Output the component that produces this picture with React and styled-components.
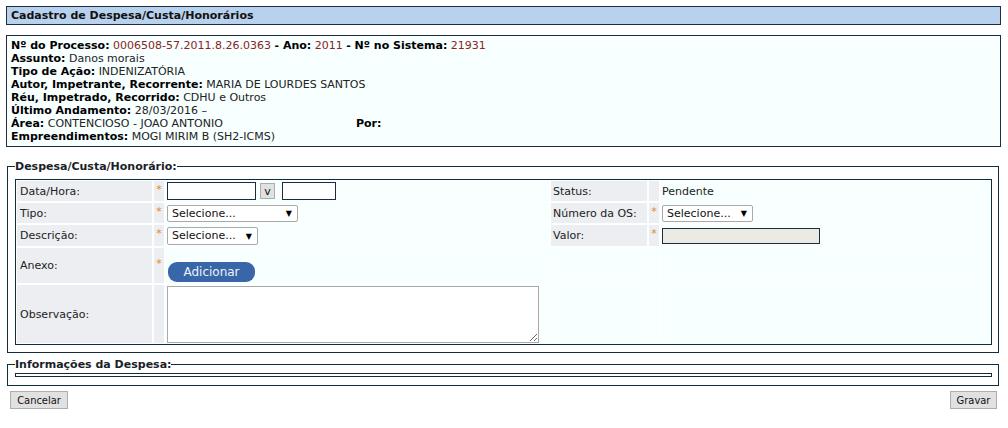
import React from "react";
import styled, { createGlobalStyle } from "styled-components";

const Global = createGlobalStyle`
  html, body { margin: 0; padding: 0; background: #ffffff; }
  body { font-family: Verdana, "DejaVu Sans", sans-serif; font-size: 11px; color: #111; }
`;

const Page = styled.div`
  width: 995px;
  padding: 6px 0 0 6px;
  display: flex;
  flex-direction: column;
`;

const TitleBar = styled.div`
  border: 1px solid #1c2d48;
  background: #b8d1ed;
  font-weight: bold;
  font-size: 11px;
  line-height: 13px;
  padding: 2px 4px;
  box-sizing: border-box;
  height: 19px;
  display: flex;
  align-items: center;
`;

const InfoBox = styled.div`
  margin-top: 10px;
  border: 1px solid #1c2d48;
  background: #f7ffff;
  padding: 3px 4px 2px;
  line-height: 13px;
  height: 112px;
  box-sizing: border-box;
`;

const InfoLine = styled.div`
  white-space: nowrap;
`;

const InfoGrid = styled.div`
  display: grid;
  grid-template-columns: 345px auto;
`;

const B = styled.b`
  font-weight: bold;
  color: #000;
`;

const Val = styled.span`
  color: ${(p) => (p.$red ? "#8b2323" : "#222")};
`;

const Fieldset = styled.fieldset`
  margin: ${(p) => p.$mt}px 2px 0 1px;
  padding: ${(p) => p.$pt}px 8px ${(p) => p.$pb}px 7px;
  border: 1px solid #0f2d3a;
  min-width: 0;
`;

const Legend = styled.legend`
  padding: 0;
  font-weight: bold;
  font-size: 11px;
  line-height: 13px;
  color: #1a1f2a;
`;

const FormTable = styled.table`
  width: 977px;
  table-layout: fixed;
  border-collapse: separate;
  border-spacing: 0;
  border: 1px solid #0f2d3a;
  background: #f7ffff;
  box-sizing: border-box;
`;

const Cell = styled.td`
  box-sizing: border-box;
  border: 1px solid #fbffff;
  padding: ${(p) => p.$pad || "0"};
  vertical-align: middle;
  background: ${(p) => (p.$grey ? "#eceef1" : "transparent")};
  color: #222;
  height: ${(p) => p.$h}px;
  white-space: nowrap;
  text-align: ${(p) => (p.$center ? "center" : "left")};
`;

const Star = styled.span`
  color: #e08a2a;
  font-size: 11px;
  display: inline-block;
  transform: translateY(-2px);
`;

const TextInput = styled.input`
  box-sizing: border-box;
  width: ${(p) => p.$w}px;
  height: ${(p) => p.$h || 18}px;
  border: 1px solid #1c2b40;
  background: ${(p) => (p.disabled ? "#ebebe4" : "#fff")};
  margin: 0 0 0 ${(p) => p.$ml || 1}px;
  padding: 0 2px;
  font: 11px Verdana, "DejaVu Sans", sans-serif;
  vertical-align: middle;
`;

const SmallButton = styled.button`
  box-sizing: border-box;
  width: 15px;
  height: 16px;
  margin-left: 4px;
  padding: 0;
  border: 1px solid #adadad;
  background: #e1e1e1;
  font: 11px Verdana, "DejaVu Sans", sans-serif;
  color: #111;
  vertical-align: middle;
`;

const SelectWrap = styled.span`
  position: relative;
  display: inline-block;
  vertical-align: middle;
  margin-left: 1px;
`;

const Select = styled.select`
  appearance: none;
  -webkit-appearance: none;
  box-sizing: border-box;
  width: ${(p) => p.$w}px;
  height: ${(p) => p.$h || 18}px;
  border: 1px solid #a9a9a9;
  border-radius: 2px;
  background: #fff;
  padding: 0 0 0 4px;
  font: 11px Verdana, "DejaVu Sans", sans-serif;
  color: #111;
  display: block;
`;

const Arrow = styled.span`
  position: absolute;
  right: 6px;
  top: 50%;
  transform: translateY(-50%);
  font-size: 8px;
  color: #000;
  pointer-events: none;
`;

const BlueButton = styled.button`
  box-sizing: border-box;
  width: 87px;
  height: 20px;
  margin: 13px 0 0 2px;
  padding: 0;
  border: none;
  border-radius: 9px;
  background: #3866a8;
  color: #eef3fa;
  font: 12px Verdana, "DejaVu Sans", sans-serif;
  display: block;
`;

const TextArea = styled.textarea`
  box-sizing: border-box;
  width: 372px;
  height: 57px;
  margin: 0 0 0 1px;
  border: 1px solid #a9a9a9;
  background: #fff;
  display: block;
`;

const EmptyTable = styled.div`
  width: 977px;
  height: 4px;
  box-sizing: border-box;
  border: 1px solid #0f2d3a;
  margin-top: 2px;
`;

const ButtonRow = styled.div`
  display: flex;
  justify-content: space-between;
  padding: 0 4px;
  margin-top: 5px;
`;

const GreyButton = styled.button`
  box-sizing: border-box;
  height: 18px;
  width: ${(p) => p.$w}px;
  padding: 0;
  border: 1px solid #adadad;
  background: #e1e1e1;
  font-family: "DejaVu Sans Condensed", "DejaVu Sans", sans-serif;
  font-stretch: condensed;
  font-size: 11px;
  color: #111;
`;

const Chosen = ({ w, h }) => (
  <SelectWrap>
    <Select $w={w} $h={h} defaultValue="">
      <option value="">Selecione...</option>
    </Select>
    <Arrow>▼</Arrow>
  </SelectWrap>
);

export default function App() {
  return (
    <>
      <Global />
      <Page>
        <TitleBar>Cadastro de Despesa/Custa/Honorários</TitleBar>
        <InfoBox>
          <InfoLine>
            <B>Nº do Processo:</B> <Val $red>0006508-57.2011.8.26.0363</Val> <B>- Ano:</B>{" "}
            <Val $red>2011</Val> <B>- Nº no Sistema:</B> <Val $red>21931</Val>
          </InfoLine>
          <InfoLine>
            <B>Assunto:</B> <Val>Danos morais</Val>
          </InfoLine>
          <InfoLine>
            <B>Tipo de Ação:</B> <Val>INDENIZATÓRIA</Val>
          </InfoLine>
          <InfoLine>
            <B>Autor, Impetrante, Recorrente:</B> <Val>MARIA DE LOURDES SANTOS</Val>
          </InfoLine>
          <InfoLine>
            <B>Réu, Impetrado, Recorrido:</B> <Val>CDHU e Outros</Val>
          </InfoLine>
          <InfoLine>
            <B>Último Andamento:</B> <Val>28/03/2016 –</Val>
          </InfoLine>
          <InfoGrid>
            <InfoLine>
              <B>Área:</B> <Val>CONTENCIOSO - JOAO ANTONIO</Val>
            </InfoLine>
            <InfoLine>
              <B>Por:</B>
            </InfoLine>
          </InfoGrid>
          <InfoLine>
            <B>Empreendimentos:</B> <Val>MOGI MIRIM B (SH2-ICMS)</Val>
          </InfoLine>
        </InfoBox>

        <Fieldset $mt={13} $pt={6} $pb={7}>
          <Legend>Despesa/Custa/Honorário:</Legend>
          <FormTable>
            <colgroup>
              <col style={{ width: 137 }} />
              <col style={{ width: 12 }} />
              <col style={{ width: 385 }} />
              <col style={{ width: 98 }} />
              <col style={{ width: 12 }} />
              <col style={{ width: 331 }} />
            </colgroup>
            <tbody>
              <tr>
                <Cell $grey $h={22} $pad="0 3px">Data/Hora:</Cell>
                <Cell $grey $h={22} $center><Star>*</Star></Cell>
                <Cell $h={22}>
                  <TextInput $w={89} />
                  <SmallButton>v</SmallButton>
                  <TextInput $w={54} $ml={7} />
                </Cell>
                <Cell $grey $h={22} $pad="0 2px">Status:</Cell>
                <Cell $grey $h={22} />
                <Cell $h={22} $pad="0 1px">Pendente</Cell>
              </tr>
              <tr>
                <Cell $grey $h={22} $pad="0 3px">Tipo:</Cell>
                <Cell $grey $h={22} $center><Star>*</Star></Cell>
                <Cell $h={22}><Chosen w={131} h={17} /></Cell>
                <Cell $grey $h={22} $pad="0 2px">Número da OS:</Cell>
                <Cell $grey $h={22} $center><Star>*</Star></Cell>
                <Cell $h={22}><Chosen w={91} h={17} /></Cell>
              </tr>
              <tr>
                <Cell $grey $h={23} $pad="0 3px">Descrição:</Cell>
                <Cell $grey $h={23} $center><Star>*</Star></Cell>
                <Cell $h={23}><Chosen w={91} h={18} /></Cell>
                <Cell $grey $h={23} $pad="0 2px">Valor:</Cell>
                <Cell $grey $h={23} $center><Star>*</Star></Cell>
                <Cell $h={23}><TextInput $w={158} $h={16} disabled /></Cell>
              </tr>
              <tr>
                <Cell $grey $h={37} $pad="0 3px">Anexo:</Cell>
                <Cell $grey $h={37} $center><Star>*</Star></Cell>
                <Cell $h={37}><BlueButton>Adicionar</BlueButton></Cell>
                <Cell $h={37} />
                <Cell $h={37} />
                <Cell $h={37} />
              </tr>
              <tr>
                <Cell $grey $h={60} $pad="0 3px">Observação:</Cell>
                <Cell $grey $h={60} />
                <Cell $h={60}><TextArea /></Cell>
                <Cell $h={60} />
                <Cell $h={60} />
                <Cell $h={60} />
              </tr>
            </tbody>
          </FormTable>
        </Fieldset>

        <Fieldset $mt={5} $pt={0} $pb={8}>
          <Legend>Informações da Despesa:</Legend>
          <EmptyTable />
        </Fieldset>

        <ButtonRow>
          <GreyButton $w={58}>Cancelar</GreyButton>
          <GreyButton $w={47}>Gravar</GreyButton>
        </ButtonRow>
      </Page>
    </>
  );
}
